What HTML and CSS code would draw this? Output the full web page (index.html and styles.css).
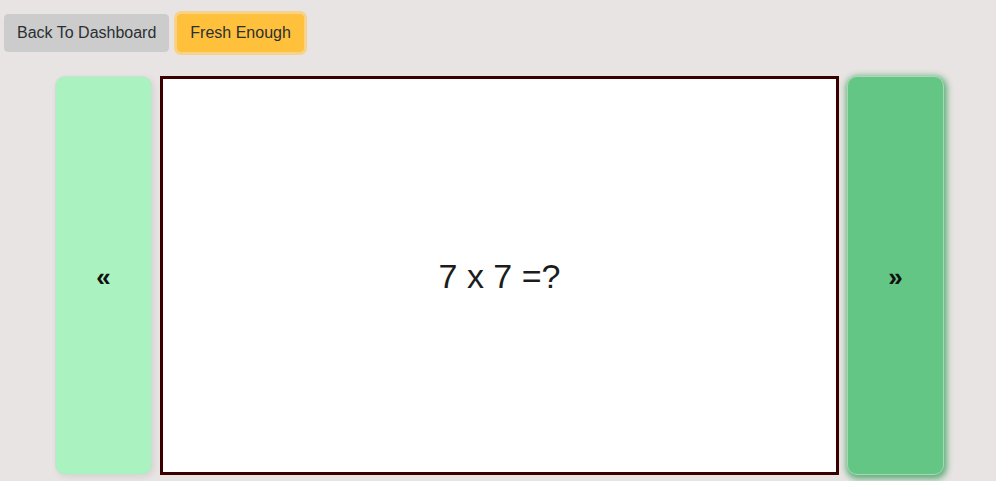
FILE: index.html
```html
<!DOCTYPE html>
<html>
<head>
<meta charset="utf-8">
<link rel="stylesheet" href="styles.css">
</head>
<body>
<div class="toolbar">
  <button class="btn btn-back">Back To Dashboard</button>
  <button class="btn btn-fresh">Fresh Enough</button>
</div>
<div class="stage">
  <div class="nav nav-prev"><span class="chev">&laquo;</span></div>
  <div class="card"><span class="question">7 x 7 =?</span></div>
  <div class="nav nav-next"><span class="chev">&raquo;</span></div>
</div>
</body>
</html>
```
FILE: styles.css
```css
html, body {
  margin: 0;
  padding: 0;
  background: #e8e4e3;
  font-family: "Liberation Sans", Arial, sans-serif;
  height: 100%;
  overflow: hidden;
}
.toolbar {
  display: flex;
  align-items: flex-start;
  gap: 8px;
  padding: 14px 0 0 4px;
  height: 38px;
}
.btn {
  font-family: "Liberation Sans", Arial, sans-serif;
  font-size: 16px;
  line-height: 24px;
  padding: 6px 12px;
  border: 1px solid transparent;
  border-radius: 4px;
  color: #2b2f33;
  white-space: nowrap;
  cursor: pointer;
}
.btn-back {
  background: #cccccc;
  border-color: #cccccc;
}
.btn-fresh {
  background: #ffc13b;
  border-color: #ffc13b;
  box-shadow: 0 0 0 3px #f8d28a;
}
.stage {
  display: flex;
  gap: 8px;
  padding: 24px 0 0 55px;
  height: 399px;
}
.nav {
  width: 97px;
  box-sizing: border-box;
  border-radius: 10px;
  display: flex;
  align-items: center;
  justify-content: center;
}
.nav-prev {
  background: #aaf2c0;
  border: 1px solid #c9dfcf;
  box-shadow: 2px 2px 6px rgba(0,0,0,0.08);
}
.nav-next {
  background: #63c685;
  border: 1px solid #a8d8b4;
  box-shadow: 1px 2px 6px 2px rgba(60,160,95,0.8);
}
.chev {
  font-size: 26px;
  font-weight: bold;
  color: #111;
  line-height: 1;
  margin-top: 2px;
}
.card {
  width: 679px;
  box-sizing: border-box;
  background: #fff;
  border: 3px solid #3a0000;
  display: flex;
  align-items: center;
  justify-content: center;
}
.question {
  font-size: 34px;
  color: #1c1c1c;
  margin-top: 1px;
}
```
